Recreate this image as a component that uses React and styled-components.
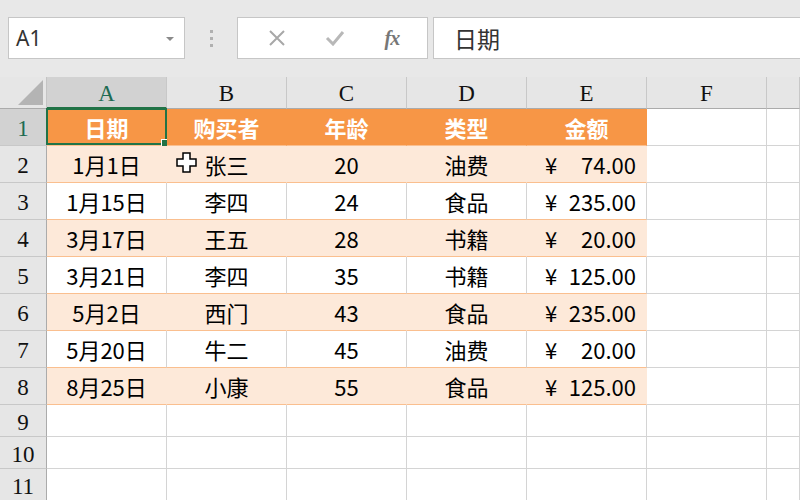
import React from 'react'
import styled, { createGlobalStyle } from 'styled-components'

const Global = createGlobalStyle`
  html, body { margin: 0; padding: 0; background: #fff; overflow: hidden; }
  * { box-sizing: border-box; }
`

const Page = styled.div`
  width: 800px;
  height: 500px;
  overflow: hidden;
  position: relative;
  font-family: "Noto Sans CJK SC", "Noto Sans", sans-serif;
`

const Toolbar = styled.div`
  height: 77px;
  background: #e8e8e8;
  display: flex;
  align-items: flex-start;
  padding: 17px 0 0 8px;
`

const Box = styled.div`
  height: 42px;
  background: #fff;
  border: 1px solid #c6c6c6;
  display: flex;
  align-items: center;
`

const NameBox = styled(Box)`
  width: 177px;
  padding: 0 10px 0 7px;
  justify-content: space-between;
  font-family: "Noto Sans", sans-serif;
  font-size: 21px;
  color: #333;
`

const Caret = styled.span`
  width: 0;
  height: 0;
  border-left: 4px solid transparent;
  border-right: 4px solid transparent;
  border-top: 4px solid #8a8a8a;
  margin-top: 2px;
`

const Dots = styled.div`
  width: 52px;
  height: 42px;
  display: flex;
  flex-direction: column;
  align-items: center;
  justify-content: center;
  gap: 4px;
  span {
    width: 3px;
    height: 3px;
    background: #b0b0b0;
  }
`

const FuncBox = styled(Box)`
  width: 191px;
  justify-content: space-around;
  padding: 0 8px 0 10px;
  color: #a8a8a8;
`

const Fx = styled.span`
  font-family: "Liberation Serif", serif;
  font-style: italic;
  font-weight: bold;
  font-size: 20px;
  color: #777;
  letter-spacing: -1px;
`

const Formula = styled(Box)`
  flex: 1;
  margin-left: 5px;
  padding-left: 20px;
  font-size: 23px;
  color: #333;
  border-right: none;
`

const Sheet = styled.div`
  display: grid;
  grid-template-columns: 47px repeat(6, 120px) 1fr;
  grid-template-rows: 32px repeat(8, 37px) repeat(3, 32px);
`

const Corner = styled.div`
  background: #e6e6e6;
  border-bottom: 1px solid #ababab;
  border-right: 1px solid #c4c4c4;
  position: relative;
  &::after {
    content: '';
    position: absolute;
    right: 3px;
    bottom: 3px;
    width: 0;
    height: 0;
    border-left: 25px solid transparent;
    border-bottom: 25px solid #b4b4b4;
  }
`

const ColHead = styled.div`
  background: ${p => (p.$active ? '#d2d2d2' : '#e6e6e6')};
  border-right: 1px solid #c8c8c8;
  border-bottom: ${p => (p.$active ? '2px solid #217346' : '1px solid #ababab')};
  display: flex;
  align-items: center;
  justify-content: center;
  font-family: "Liberation Serif", serif;
  font-size: 23px;
  color: ${p => (p.$active ? '#1e6b52' : '#111')};
  padding-top: 3px;
`

const RowHead = styled.div`
  background: ${p => (p.$active ? '#d2d2d2' : '#e6e6e6')};
  border-right: 1px solid #ababab;
  border-bottom: 1px solid #c8c8c8;
  display: flex;
  align-items: center;
  justify-content: center;
  font-family: "Liberation Serif", serif;
  font-size: 23px;
  color: ${p => (p.$active ? '#1e6b52' : '#111')};
  padding-top: 4px;
`

const fills = {
  head: '#f79646',
  band: '#fde9d9',
  plain: '#ffffff',
  empty: '#ffffff',
}

const Cell = styled.div`
  position: relative;
  background: ${p => fills[p.$kind]};
  border-right: 1px solid ${p => (p.$kind === 'plain' || p.$kind === 'empty' ? '#d4d4d4' : fills[p.$kind])};
  border-bottom: 1px solid ${p => (p.$kind === 'empty' ? '#d4d4d4' : '#fabf8f')};
  display: flex;
  align-items: center;
  justify-content: center;
  font-size: 22px;
  color: ${p => (p.$kind === 'head' ? '#fff' : '#000')};
  font-weight: ${p => (p.$kind === 'head' ? 700 : 400)};
  white-space: nowrap;
`

const Money = styled.div`
  width: 100%;
  display: flex;
  justify-content: space-between;
  padding: 0 10px 0 18px;
`

const Selection = styled.div`
  position: absolute;
  inset: -1px -1px 0 -1px;
  border: 2px solid #217346;
  pointer-events: none;
  &::after {
    content: '';
    position: absolute;
    right: -5px;
    bottom: -5px;
    width: 7px;
    height: 7px;
    background: #217346;
    border: 1px solid #fff;
  }
`

const Cursor = styled.svg`
  position: absolute;
  left: 176px;
  top: 152px;
`

const header = ['日期', '购买者', '年龄', '类型', '金额']
const rows = [
  ['1月1日', '张三', '20', '油费', '74.00'],
  ['1月15日', '李四', '24', '食品', '235.00'],
  ['3月17日', '王五', '28', '书籍', '20.00'],
  ['3月21日', '李四', '35', '书籍', '125.00'],
  ['5月2日', '西门', '43', '食品', '235.00'],
  ['5月20日', '牛二', '45', '油费', '20.00'],
  ['8月25日', '小康', '55', '食品', '125.00'],
]
const cols = ['A', 'B', 'C', 'D', 'E', 'F', '']

export default function App() {
  const cells = []
  cells.push(<Corner key="corner" />)
  cols.forEach((c, i) => cells.push(<ColHead key={'h' + i} $active={c === 'A'}>{c}</ColHead>))

  cells.push(<RowHead key="r1" $active>1</RowHead>)
  header.forEach((h, i) =>
    cells.push(
      <Cell key={'hd' + i} $kind="head">
        {h}
        {i === 0 && <Selection />}
      </Cell>
    )
  )
  cells.push(<Cell key="hdF" $kind="empty" />, <Cell key="hdG" $kind="empty" />)

  rows.forEach((r, ri) => {
    const kind = ri % 2 === 0 ? 'band' : 'plain'
    cells.push(<RowHead key={'rh' + ri}>{ri + 2}</RowHead>)
    r.forEach((v, ci) =>
      cells.push(
        <Cell key={ri + '-' + ci} $kind={kind}>
          {ci === 4 ? (
            <Money>
              <span>¥</span>
              <span>{v}</span>
            </Money>
          ) : (
            v
          )}
        </Cell>
      )
    )
    cells.push(<Cell key={ri + 'F'} $kind="empty" />, <Cell key={ri + 'G'} $kind="empty" />)
  })

  ;[9, 10, 11].forEach(n => {
    cells.push(<RowHead key={'rh' + n}>{n}</RowHead>)
    for (let i = 0; i < 7; i++) cells.push(<Cell key={n + '-' + i} $kind="empty" />)
  })

  return (
    <Page>
      <Global />
      <Toolbar>
        <NameBox>
          A1
          <Caret />
        </NameBox>
        <Dots>
          <span />
          <span />
          <span />
        </Dots>
        <FuncBox>
          <svg width="18" height="18" viewBox="0 0 18 18">
            <path d="M2 2 L16 16 M16 2 L2 16" stroke="#a8a8a8" strokeWidth="2" fill="none" />
          </svg>
          <svg width="20" height="16" viewBox="0 0 20 16">
            <path d="M2 8 L8 14 L18 2" stroke="#b8b8b8" strokeWidth="3" fill="none" />
          </svg>
          <Fx>fx</Fx>
        </FuncBox>
        <Formula>日期</Formula>
      </Toolbar>
      <Sheet>{cells}</Sheet>
      <Cursor width="22" height="22" viewBox="0 0 22 22">
        <path
          d="M7 1 H14 V7 H20 V14 H14 V20 H7 V14 H1 V7 H7 Z"
          fill="#fff"
          stroke="#000"
          strokeWidth="1.5"
        />
      </Cursor>
    </Page>
  )
}
